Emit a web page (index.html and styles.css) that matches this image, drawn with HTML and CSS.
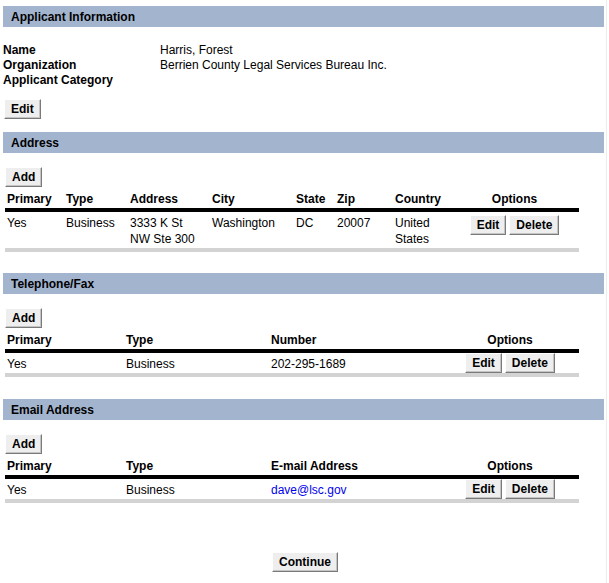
FILE: index.html
```html
<!DOCTYPE html>
<html>
<head>
<meta charset="utf-8">
<title>Applicant Information</title>
<link rel="stylesheet" href="styles.css">
</head>
<body>
<div class="page">
  <div class="bar">Applicant Information</div>
  <table class="info">
    <tr><th>Name</th><td>Harris, Forest</td></tr>
    <tr><th>Organization</th><td>Berrien County Legal Services Bureau Inc.</td></tr>
    <tr><th>Applicant Category</th><td></td></tr>
  </table>
  <div class="actions"><button class="btn">Edit</button></div>

  <div class="bar gap-top">Address</div>
  <div class="actions add"><button class="btn">Add</button></div>
  <table class="grid addr">
    <colgroup>
      <col style="width:59px"><col style="width:64px"><col style="width:82px"><col style="width:84px">
      <col style="width:41px"><col style="width:58px"><col style="width:57px"><col style="width:129px">
    </colgroup>
    <thead>
      <tr><th>Primary</th><th>Type</th><th>Address</th><th>City</th><th>State</th><th>Zip</th><th>Country</th><th class="opt">Options</th></tr>
    </thead>
    <tbody>
      <tr class="tall"><td>Yes</td><td>Business</td><td>3333 K St<br>NW Ste 300</td><td>Washington</td><td>DC</td><td>20007</td><td>United<br>States</td>
        <td class="opt"><div class="btns"><button class="btn">Edit</button><button class="btn">Delete</button></div></td></tr>
    </tbody>
  </table>

  <div class="bar">Telephone/Fax</div>
  <div class="actions add"><button class="btn">Add</button></div>
  <table class="grid">
    <colgroup>
      <col style="width:119px"><col style="width:145px"><col style="width:172px"><col style="width:138px">
    </colgroup>
    <thead>
      <tr><th>Primary</th><th>Type</th><th>Number</th><th class="opt">Options</th></tr>
    </thead>
    <tbody>
      <tr><td>Yes</td><td>Business</td><td>202-295-1689</td>
        <td class="opt"><div class="btns"><button class="btn">Edit</button><button class="btn">Delete</button></div></td></tr>
    </tbody>
  </table>

  <div class="bar bar-wide">Email Address</div>
  <div class="actions add"><button class="btn">Add</button></div>
  <table class="grid">
    <colgroup>
      <col style="width:119px"><col style="width:145px"><col style="width:172px"><col style="width:138px">
    </colgroup>
    <thead>
      <tr><th>Primary</th><th>Type</th><th>E-mail Address</th><th class="opt">Options</th></tr>
    </thead>
    <tbody>
      <tr><td>Yes</td><td>Business</td><td><a class="mail" href="#">dave@lsc.gov</a></td>
        <td class="opt"><div class="btns"><button class="btn">Edit</button><button class="btn">Delete</button></div></td></tr>
    </tbody>
  </table>

  <div class="footer"><button class="btn">Continue</button></div>
</div>
</body>
</html>
```

FILE: styles.css
```css
html, body {
  margin: 0;
  padding: 0;
  background: #fff;
}
body {
  font-family: "Liberation Sans", Arial, sans-serif;
  font-size: 12px;
  color: #000;
  width: 606px;
  min-height: 100vh;
  border-right: 1px solid #ececec;
}
.page {
  padding: 6px 0 10px 3px;
  width: 601px;
}
.bar {
  background: #a3b5ce;
  height: 20px;
  line-height: 20px;
  padding-top: 1px;
  padding-left: 8px;
  font-weight: bold;
}
.gap-top { margin-top: 13px; }
.info {
  border-collapse: collapse;
  margin-top: 16px;
}
.info th, .info td {
  padding: 0;
  line-height: 15px;
  height: 15px;
  text-align: left;
  vertical-align: top;
}
.info th {
  width: 157px;
  font-weight: bold;
}
.actions {
  margin-top: 11px;
  padding-left: 1px;
  display: flex;
}
.actions.add {
  margin-top: 14px;
  padding-left: 2px;
}
.btn {
  font-family: "Liberation Sans", Arial, sans-serif;
  font-size: 12px;
  font-weight: bold;
  color: #000;
  background: #eeeeee;
  height: 20px;
  padding: 0 6px;
  margin: 0;
  border: 1px solid;
  border-color: #ffffff #7a7a7a #7a7a7a #ffffff;
  box-shadow: inset -1px -1px 0 #c4c4c4;
  line-height: 18px;
  cursor: default;
}
.grid {
  border-collapse: collapse;
  table-layout: fixed;
  width: 574px;
  margin-left: 2px;
}
.grid th {
  font-weight: bold;
  text-align: left;
  padding: 5px 2px 1px;
  line-height: 15px;
  border-bottom: 4px solid #000;
}
.grid td {
  padding: 2px 2px 0;
  line-height: 16px;
  height: 18px;
  vertical-align: middle;
  border-bottom: 4px solid #d3d3d3;
}
.grid td.opt {
  padding: 0 2px;
  height: 20px;
}
.grid .tall td {
  vertical-align: top;
  padding-top: 3px;
  padding-bottom: 1px;
}
.grid .tall td.opt {
  padding-top: 3px;
}
.grid .opt {
  text-align: center;
}
.btns {
  display: flex;
  justify-content: center;
  gap: 3px;
}
.mail {
  color: #0000ee;
  text-decoration: none;
}
.grid + .bar { margin-top: 21px; }
.grid + .bar.bar-wide { margin-top: 22px; }
.footer {
  margin-top: 49px;
  display: flex;
  justify-content: center;
  padding-left: 3px;
}
```
